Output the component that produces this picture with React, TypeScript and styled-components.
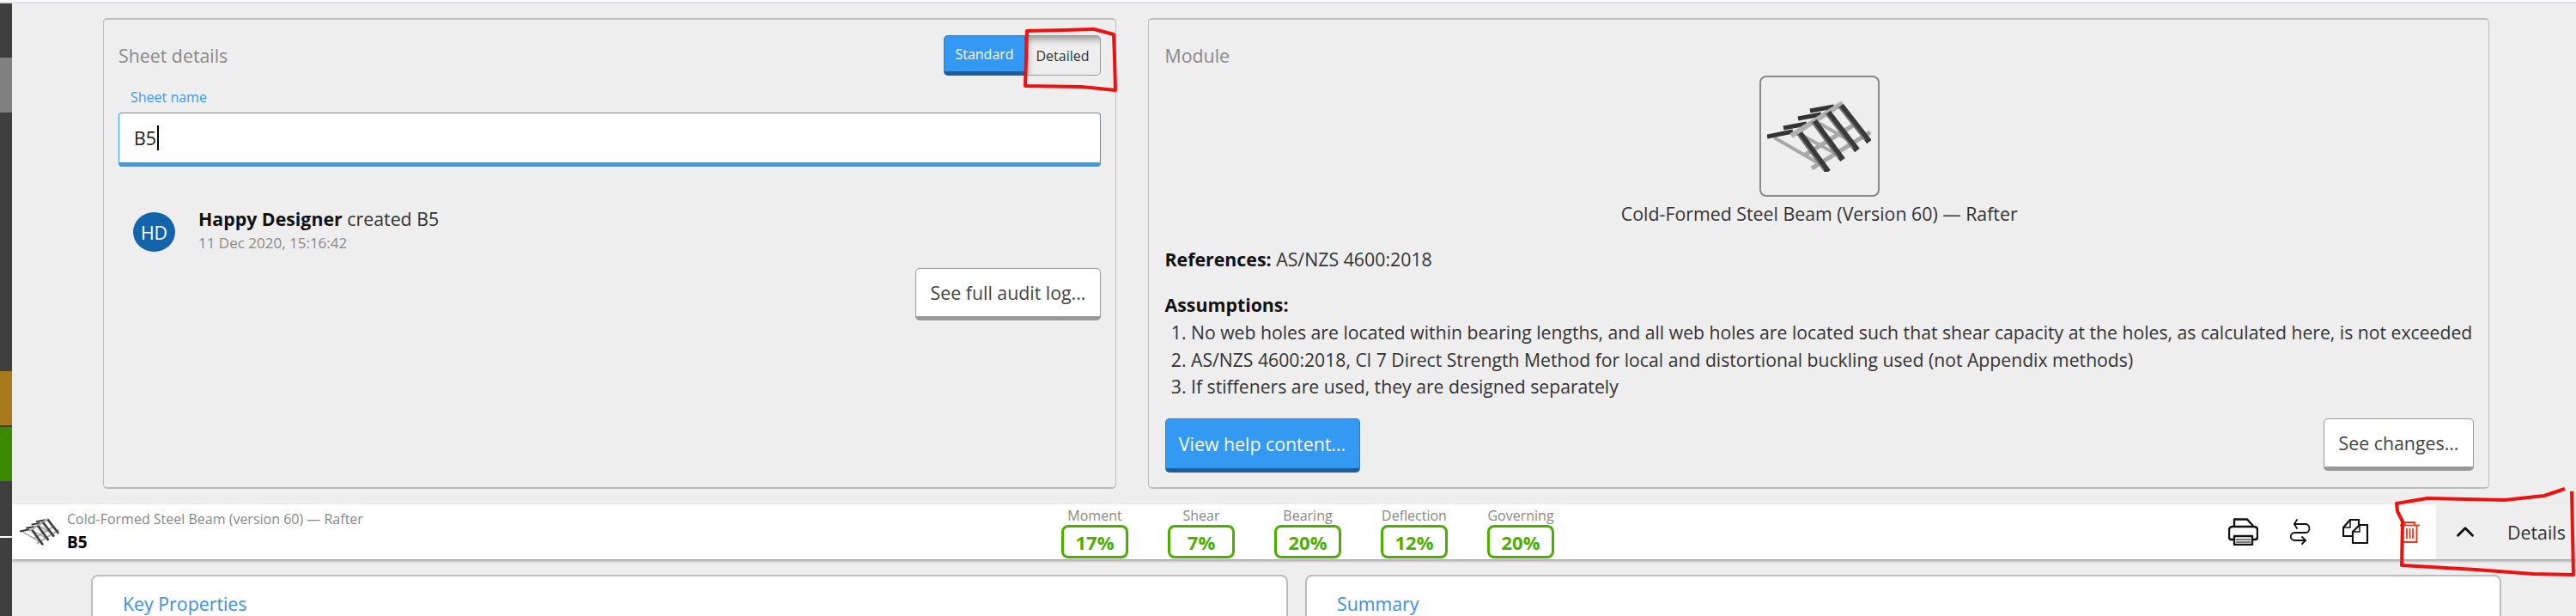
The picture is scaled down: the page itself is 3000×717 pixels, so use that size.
import React from "react";
import styled, { createGlobalStyle } from "styled-components";
import { ChevronUp } from "lucide-react";

const GlobalStyle = createGlobalStyle`
  html, body {
    margin: 0;
    padding: 0;
    background: #eeeeee;
  }
  body {
    width: 3000px;
    height: 717px;
    overflow: hidden;
    font-family: "Open Sans", "Liberation Sans", sans-serif;
    color: #333;
  }
  * {
    box-sizing: border-box;
  }
`;

const Page = styled.div`
  position: relative;
  width: 3000px;
  height: 717px;
  overflow: hidden;
`;

const TopStrip = styled.div`
  height: 4px;
  background: #fff;
  border-bottom: 2px solid #dfdfe8;
`;

const Shell = styled.div`
  display: flex;
  height: 713px;
`;

const Sidebar = styled.div`
  width: 14px;
  flex: none;
  display: flex;
  flex-direction: column;
  background: #3f3f3f;
`;

const SideBlock = styled.div<{ $h: number; $color: string }>`
  height: ${(p) => p.$h}px;
  background: ${(p) => p.$color};
`;

const Main = styled.div`
  flex: 1;
  min-width: 0;
  padding-top: 17px;
  display: flex;
  flex-direction: column;
`;

const PanelRow = styled.div`
  display: flex;
  gap: 37px;
  padding-left: 106px;
`;

const Panel = styled.section<{ $width: number; $inset: number }>`
  width: ${(p) => p.$width}px;
  height: 548px;
  display: flex;
  flex-direction: column;
  padding: 18px 17px 17px ${(p) => p.$inset}px;
  border: 2px solid #bdbdbd;
  border-left-width: 1.5px;
  border-right-width: 1.5px;
  border-radius: 5px;
`;

const PanelHeader = styled.div`
  height: 47px;
  flex: none;
  display: flex;
  align-items: center;
  justify-content: space-between;
`;

const PanelTitle = styled.h2`
  margin: 0;
  font-size: 21.33px;
  font-weight: 400;
  color: #888;
`;

const Toggle = styled.div`
  display: flex;
  height: 47px;
`;

const ToggleOn = styled.button`
  width: 95px;
  padding: 0;
  font: 500 16px "Open Sans", sans-serif;
  color: #fff;
  background: #3399f3;
  border: 1px solid #2a7cc4;
  border-bottom: 5px solid #1f5f99;
  border-radius: 5px 0 0 5px;
`;

const ToggleOff = styled.button`
  width: 88px;
  padding: 0;
  font: 400 16px "Open Sans", sans-serif;
  color: #333;
  background: #eee;
  border: 1px solid #999;
  border-left: none;
  border-radius: 0 5px 5px 0;
  box-shadow: inset 5px 6px 7px -2px rgba(0, 0, 0, 0.35);
`;

const FieldLabel = styled.label`
  display: block;
  margin: 15px 0 8px 14px;
  font-size: 16px;
  line-height: 20px;
  color: #3a9bf0;
`;

const NameInput = styled.div`
  height: 63px;
  flex: none;
  display: flex;
  align-items: center;
  padding-left: 17px;
  font-size: 21.33px;
  color: #222;
  background: #fff;
  border: 1.5px solid #3c9ae8;
  border-bottom-width: 5px;
  border-radius: 4px;
`;

const Caret = styled.span`
  width: 2px;
  height: 29px;
  margin-left: 1px;
  background: #000;
`;

const Activity = styled.div`
  display: flex;
  gap: 27px;
  margin: 47px 0 15px 17px;
`;

const Avatar = styled.div`
  width: 49px;
  height: 46px;
  margin-top: 6px;
  display: flex;
  align-items: center;
  justify-content: center;
  font-size: 21.33px;
  color: #fff;
  background: #1464ac;
  border-radius: 50%;
`;

const ActivityText = styled.div`
  font-size: 21.33px;
  line-height: 28px;
  color: #333;
  b {
    font-weight: 700;
    color: #111;
  }
`;

const ActivityDate = styled.div`
  font-size: 17px;
  color: #888;
`;

const ActionButton = styled.button<{ $primary?: boolean; $width: number }>`
  width: ${(p) => p.$width}px;
  height: ${(p) => (p.$primary ? 63 : 61)}px;
  padding: 0;
  font: 400 21.33px "Open Sans", sans-serif;
  white-space: nowrap;
  color: ${(p) => (p.$primary ? "#fff" : "#444")};
  background: ${(p) => (p.$primary ? "#3399f3" : "#fff")};
  border: 1.5px solid ${(p) => (p.$primary ? "#2a7cc4" : "#999")};
  border-bottom: 5px solid ${(p) => (p.$primary ? "#1f5f99" : "#999")};
  border-radius: 5px;
`;

const AuditRow = styled.div`
  display: flex;
  justify-content: flex-end;
`;

const Thumb = styled.div`
  width: 140px;
  height: 141px;
  flex: none;
  align-self: center;
  display: flex;
  align-items: center;
  justify-content: center;
  border: 2px solid #888;
  border-radius: 8px;
`;

const Caption = styled.div`
  margin-top: 6px;
  text-align: center;
  font-size: 21.33px;
  line-height: 28px;
`;

const InfoLine = styled.div`
  margin-top: 25px;
  font-size: 21.33px;
  line-height: 28px;
  b {
    font-weight: 700;
    color: #111;
  }
`;

const Assumptions = styled.ol`
  margin: 2px 0 0;
  padding: 0 0 0 30.5px;
  font-size: 21.2px;
  line-height: 31.5px;
  white-space: nowrap;
`;

const ModuleFooter = styled.div`
  margin-top: auto;
  display: flex;
  justify-content: space-between;
`;

const Bar = styled.div`
  height: 64px;
  flex: none;
  margin-top: 18px;
  display: flex;
  position: relative;
  box-shadow: 0 2px 3px rgba(0, 0, 0, 0.35);
`;

const BarMain = styled.div`
  flex: 1;
  display: flex;
  align-items: stretch;
  background: #fff;
`;

const Identity = styled.div`
  width: 1222px;
  flex: none;
  display: flex;
  align-items: center;
  gap: 9px;
  padding-left: 9px;
`;

const IdentityText = styled.div`
  display: flex;
  flex-direction: column;
`;

const ModuleName = styled.div`
  font-size: 16px;
  line-height: 24px;
  color: #888;
`;

const SheetName = styled.div`
  font-size: 19px;
  font-weight: 700;
  line-height: 30px;
  color: #000;
`;

const Metrics = styled.div`
  display: flex;
  gap: 46px;
`;

const Metric = styled.div`
  width: 78px;
  padding-top: 4px;
  display: flex;
  flex-direction: column;
  align-items: center;
`;

const MetricLabel = styled.div`
  height: 20px;
  font-size: 16px;
  line-height: 18px;
  white-space: nowrap;
  color: #888;
`;

const MetricBadge = styled.div`
  width: 78px;
  height: 39px;
  display: flex;
  align-items: center;
  justify-content: center;
  font-size: 22px;
  font-weight: 700;
  color: #4caf00;
  border: 3px solid #4caf00;
  border-radius: 8px;
`;

const BarActions = styled.div`
  margin-left: auto;
  display: flex;
  align-items: center;
  gap: 36px;
  padding-right: 19px;
`;

const BarDetails = styled.div`
  width: 163px;
  flex: none;
  display: flex;
  align-items: center;
  padding-left: 17px;
  gap: 32px;
  font-size: 21.33px;
  color: #333;
  background: #eee;
`;

const CardRow = styled.div`
  display: flex;
  gap: 20px;
  margin-top: 18px;
  padding-left: 92px;
`;

const Card = styled.section<{ $width: number }>`
  width: ${(p) => p.$width}px;
  height: 120px;
  flex: none;
  padding: 18px 35px;
  background: #fff;
  border: 2px solid #bdbdbd;
  border-radius: 8px;
`;

const CardTitle = styled.h3`
  margin: 0;
  font-size: 21.33px;
  font-weight: 400;
  line-height: 28px;
  color: #3a8fe8;
`;

const Scribbles = styled.svg`
  position: absolute;
  left: 0;
  top: 0;
  pointer-events: none;
`;

const RafterIcon = ({ width }: { width: number }) => (
  <svg width={width} viewBox="0 0 121 82" fill="none" strokeLinecap="butt">
    <g stroke="#a8a8a8" strokeWidth="4">
      <path d="M8 42 60 72" />
      <path d="M52 78 120 36" strokeWidth="5" />
      <path d="M43 63 100 28" strokeWidth="5" />
      <path d="M36 37 82 62" />
      <path d="M60 25 100 48" />
    </g>
    <g stroke="#333" strokeWidth="5">
      <path d="M0 41 30 35" />
      <path d="M19 31 46 26" />
      <path d="M36 20 63 15" />
      <path d="M50 11 78 6" />
    </g>
    <path d="M28 40 88 2" stroke="#b0b0b0" strokeWidth="6" />
    <g stroke="#3a3a3a" strokeWidth="7">
      <path d="M38 37 71 82" />
      <path d="M55 23 88 68" />
      <path d="M71 13 105 57" />
      <path d="M86 5 119 47" />
    </g>
    <g stroke="#777" strokeWidth="2">
      <path d="M35 38 66 80" />
      <path d="M52 24 83 66" />
      <path d="M68 14 100 55" />
      <path d="M83 6 114 45" />
    </g>
  </svg>
);

const PrinterIcon = () => (
  <svg width="35" height="32" viewBox="0 0 35 32" fill="none" stroke="#111" strokeWidth="2.4" strokeLinejoin="round">
    <path d="M7 10V1.500H22L29 9" />
    <path d="M7 25H4C2 25 1 24 1 22V14C1 11 3 10 5 10H30C33 10 34 12 34 14V22C34 24 33 25 31 25H28" />
    <path d="M7 21H28V31H7Z" />
    <path d="M9 25H26M9 28H26" stroke="#777" strokeWidth="1.800" />
  </svg>
);

const SwapIcon = () => (
  <svg width="26" height="31" viewBox="0 0 26 31" fill="none" stroke="#111" strokeWidth="1.800" strokeLinecap="round" strokeLinejoin="round">
    <path d="M9 1 6 6 9 11" />
    <path d="M6 6H19C25 6 25 16 19 16H7C0 16 0 25 7 25H19" />
    <path d="M15 21 19 25 15 29" />
  </svg>
);

const CopyIcon = () => (
  <svg width="31" height="30" viewBox="0 0 31 30" fill="none" stroke="#111" strokeWidth="2.200" strokeLinejoin="round">
    <path d="M11 20H1V10L9 1H19V7" />
    <path d="M9 1V10H1" strokeWidth="1.500" />
    <path d="M20 7H29V28H12V15Z" />
    <path d="M20 7V15H12" strokeWidth="1.500" />
  </svg>
);

const TrashIcon = () => (
  <svg width="23" height="25" viewBox="0 0 23 25" fill="none" stroke="#f0341c" strokeWidth="1.800">
    <path d="M0 4.500H23" />
    <path d="M6 4V1H17V4" />
    <path d="M3.500 4.500V24H19.500V4.500" />
    <path d="M8 8V20M11.500 8V20M15 8V20" />
  </svg>
);

const metrics = [
  { label: "Moment", value: "17%" },
  { label: "Shear", value: "7%" },
  { label: "Bearing", value: "20%" },
  { label: "Deflection", value: "12%" },
  { label: "Governing", value: "20%" },
];

export default function App() {
  return (
    <Page>
      <GlobalStyle />
      <TopStrip />
      <Shell>
        <Sidebar>
          <SideBlock $h={63} $color="#3f3f3f" />
          <SideBlock $h={64} $color="#808080" />
          <SideBlock $h={301} $color="#3f3f3f" />
          <SideBlock $h={63} $color="#a87a1c" />
          <SideBlock $h={2} $color="#3f3f3f" />
          <SideBlock $h={63} $color="#3a8a00" />
          <SideBlock $h={64} $color="#3f3f3f" />
          <SideBlock $h={2} $color="#ffffff" />
        </Sidebar>
        <Main>
          <PanelRow>
            <Panel $width={1180} $inset={17}>
              <PanelHeader>
                <PanelTitle>Sheet details</PanelTitle>
                <Toggle>
                  <ToggleOn>Standard</ToggleOn>
                  <ToggleOff>Detailed</ToggleOff>
                </Toggle>
              </PanelHeader>
              <FieldLabel>Sheet name</FieldLabel>
              <NameInput>
                B5
                <Caret />
              </NameInput>
              <Activity>
                <Avatar>HD</Avatar>
                <ActivityText>
                  <b>Happy Designer</b> created B5
                  <ActivityDate>11 Dec 2020, 15:16:42</ActivityDate>
                </ActivityText>
              </Activity>
              <AuditRow>
                <ActionButton $width={216}>See full audit log...</ActionButton>
              </AuditRow>
            </Panel>
            <Panel $width={1562} $inset={18.5}>
              <PanelHeader>
                <PanelTitle>Module</PanelTitle>
              </PanelHeader>
              <Thumb>
                <RafterIcon width={121} />
              </Thumb>
              <Caption>Cold-Formed Steel Beam (Version 60) — Rafter</Caption>
              <InfoLine>
                <b>References:</b> AS/NZS 4600:2018
              </InfoLine>
              <InfoLine>
                <b>Assumptions:</b>
              </InfoLine>
              <Assumptions>
                <li>No web holes are located within bearing lengths, and all web holes are located such that shear capacity at the holes, as calculated here, is not exceeded</li>
                <li>AS/NZS 4600:2018, Cl 7 Direct Strength Method for local and distortional buckling used (not Appendix methods)</li>
                <li>If stiffeners are used, they are designed separately</li>
              </Assumptions>
              <ModuleFooter>
                <ActionButton $primary $width={227}>View help content...</ActionButton>
                <ActionButton $width={175}>See changes...</ActionButton>
              </ModuleFooter>
            </Panel>
          </PanelRow>
          <Bar>
            <BarMain>
              <Identity>
                <RafterIcon width={46} />
                <IdentityText>
                  <ModuleName>Cold-Formed Steel Beam (version 60) — Rafter</ModuleName>
                  <SheetName>B5</SheetName>
                </IdentityText>
              </Identity>
              <Metrics>
                {metrics.map((m) => (
                  <Metric key={m.label}>
                    <MetricLabel>{m.label}</MetricLabel>
                    <MetricBadge>{m.value}</MetricBadge>
                  </Metric>
                ))}
              </Metrics>
              <BarActions>
                <PrinterIcon />
                <SwapIcon />
                <CopyIcon />
                <TrashIcon />
              </BarActions>
            </BarMain>
            <BarDetails>
              <ChevronUp size={34} color="#111" strokeWidth={2} />
              Details
            </BarDetails>
          </Bar>
          <CardRow>
            <Card $width={1394}>
              <CardTitle>Key Properties</CardTitle>
            </Card>
            <Card $width={1393}>
              <CardTitle>Summary</CardTitle>
            </Card>
          </CardRow>
        </Main>
      </Shell>
      <Scribbles width="3000" height="717" viewBox="0 0 3000 717" fill="none" stroke="#ee1111" strokeWidth="4" strokeLinejoin="round">
        <path d="M1196 36 1194 100 1259 101 1299 105 1298 67 1297 40 1274 34 1240 35 1196 36Z" />
        <path d="M2987 569 2963 577 2917 582 2827 580 2791 586 2792 595 2798 607 2797 658 2883 663 2950 668 2997 669 2995 572" />
      </Scribbles>
    </Page>
  );
}
